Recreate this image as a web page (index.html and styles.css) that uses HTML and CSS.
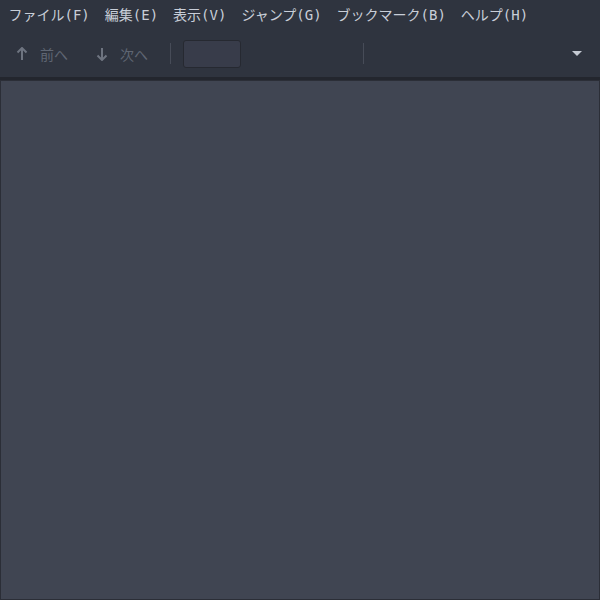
FILE: index.html
```html
<!DOCTYPE html>
<html lang="ja">
<head>
    <meta charset="UTF-8">
    <title>ビューア</title>
    <link rel="stylesheet" href="styles.css">
</head>
<body>

<div class="window">
    <div class="menubar">
        <span class="menu-item">ファイル(F)</span>
        <span class="menu-item">編集(E)</span>
        <span class="menu-item">表示(V)</span>
        <span class="menu-item">ジャンプ(G)</span>
        <span class="menu-item">ブックマーク(B)</span>
        <span class="menu-item">ヘルプ(H)</span>
    </div>

    <div class="toolbar">
        <div class="tool-button">
            <svg width="12" height="14" viewBox="0 0 12 14">
                <path d="M6 1 L6 13 M1.5 5.5 L6 1 L10.5 5.5" stroke="currentColor" stroke-width="2" fill="none"/>
            </svg>
            <span>前へ</span>
        </div>
        <div class="tool-button">
            <svg width="12" height="14" viewBox="0 0 12 14">
                <path d="M6 1 L6 13 M1.5 8.5 L6 13 L10.5 8.5" stroke="currentColor" stroke-width="2" fill="none"/>
            </svg>
            <span>次へ</span>
        </div>
        <div class="separator"></div>
        <input type="text" class="page-entry" disabled>
        <div class="spacer"></div>
        <div class="separator"></div>
        <div class="grow"></div>
        <div class="dropdown-arrow"></div>
    </div>

    <div class="content"></div>
</div>

</body>
</html>
```

FILE: styles.css
```css
html, body {
    margin: 0;
    height: 100%;
}

body {
    font-family: "DejaVu Sans Mono", "Noto Sans CJK JP", monospace;
    font-size: 14px;
    background-color: #2f343f;
    color: #d3dae3;
}

.window {
    display: flex;
    flex-direction: column;
    height: 100vh;
}

.menubar {
    display: flex;
    height: 30px;
    align-items: center;
    padding-left: 1px;
    background-color: #2f343f;
}

.menu-item {
    padding: 0 7.5px;
    line-height: 30px;
    color: #c8ced8;
}

.toolbar {
    display: flex;
    align-items: center;
    height: 47px;
    padding: 0 8px;
    background-color: #2f343f;
    border-bottom: 3px solid #23262e;
}

.tool-button {
    display: flex;
    align-items: center;
    gap: 12px;
    padding: 0 10px 0 8px;
    color: #5f6673;
    height: 32px;
}

.tool-button svg {
    color: #6e7480;
}

.tool-button + .tool-button {
    margin-left: 10px;
}

.separator {
    width: 1px;
    height: 21px;
    background-color: #474c58;
    margin: 0 12px;
}

.page-entry {
    width: 58px;
    height: 28px;
    box-sizing: border-box;
    margin-left: 0;
    background-color: #383c4a;
    border: 1px solid #262931;
    border-radius: 3px;
}

.spacer {
    width: 110px;
}

.grow {
    flex: 1;
}

.dropdown-arrow {
    width: 0;
    height: 0;
    border-left: 5px solid transparent;
    border-right: 5px solid transparent;
    border-top: 5px solid #c5cad3;
    margin-right: 10px;
}

.content {
    flex: 1;
    background-color: #404552;
    border: 1px solid #2b2e37;
}
```
